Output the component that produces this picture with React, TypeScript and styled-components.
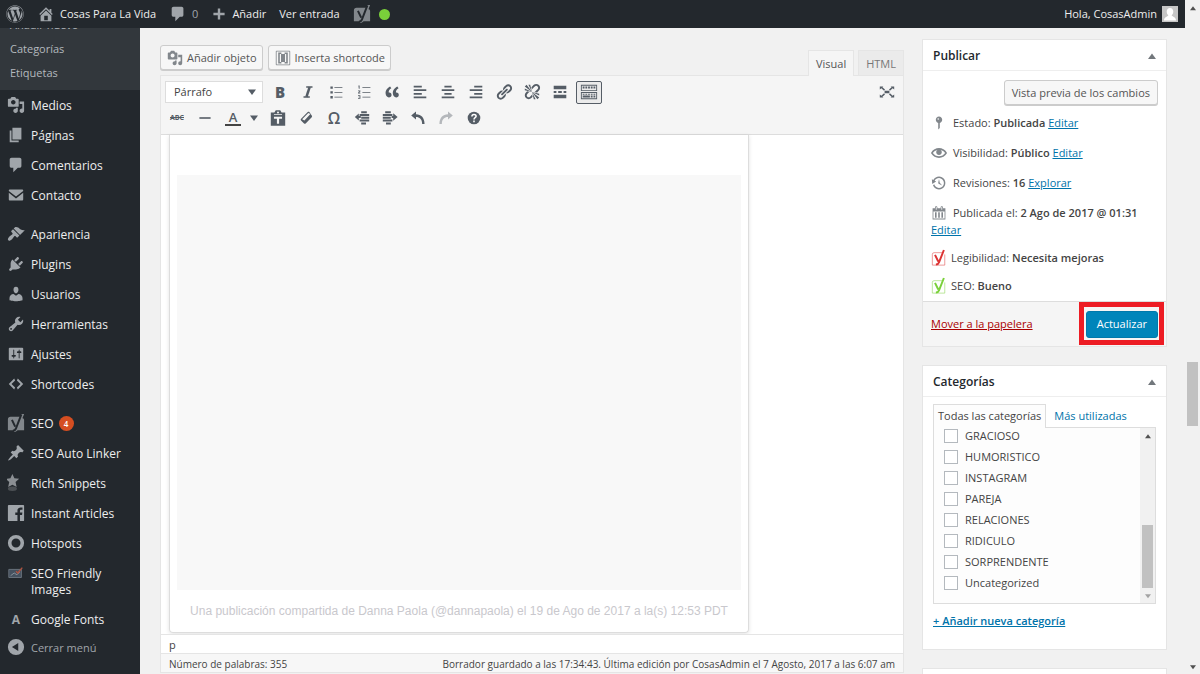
import React from "react";
import styled, { createGlobalStyle } from "styled-components";
import { FaWordpress } from "react-icons/fa";

const GlobalStyle = createGlobalStyle`
  *, *::before, *::after { box-sizing: border-box; }
  html, body { margin: 0; height: 100%; overflow: hidden; }
  body {
    background: #f1f1f1;
    color: #444;
    font-family: "Open Sans", "Noto Sans", sans-serif;
    font-size: 11px;
    line-height: 16px;
  }
  button, input, select { font: inherit; color: inherit; margin: 0; padding: 0; }
  a { color: #0073aa; }
  b { font-weight: 600; }
  h2, p, ul { margin: 0; padding: 0; }
  ul { list-style: none; }
  svg { display: block; flex: none; }
`;

/* ---------- icons ---------- */

const glyphs = {
  media: "M13 11V4c0-.55-.45-1-1-1h-1.67L9 1H5L3.67 3H2c-.55 0-1 .45-1 1v7c0 .55.45 1 1 1h10c.55 0 1-.45 1-1zM7 4.5c1.38 0 2.5 1.12 2.5 2.5S8.38 9.5 7 9.5 4.5 8.38 4.5 7 5.62 4.5 7 4.5zM14 6h5v10.5c0 1.38-1.12 2.5-2.5 2.5S14 17.88 14 16.5s1.12-2.5 2.5-2.5c.17 0 .34.02.5.05V9h-3V6zm-4 8.05V13h2v3.5c0 1.38-1.12 2.5-2.5 2.5S7 17.88 7 16.5 8.12 14 9.5 14c.17 0 .34.02.5.05z",
  page: "M6 15V2h10v13H6zm-1 1h8v2H3V5h2v11z",
  comment: "M5 2h9c1.1 0 2 .9 2 2v7c0 1.1-.9 2-2 2h-2l-5 5v-5H5c-1.1 0-2-.9-2-2V4c0-1.1.9-2 2-2z",
  email: "M3 4h14c.6 0 1 .4 1 1v.6l-8 6.2-8-6.2V5c0-.6.4-1 1-1zM2 7.6l8 6.2 8-6.2V15c0 .6-.4 1-1 1H3c-.6 0-1-.4-1-1z",
  appearance: "M14.48 11.06L7.41 3.99l1.5-1.5c.5-.56 2.3-.47 3.51.32 1.21.8 1.43 1.28 2.91 2.1 1.18.64 2.45 1.26 4.45.85zm-.71.71L6.7 4.7 4.93 6.47c-.39.39-.39 1.02 0 1.41l1.06 1.06c.39.39.39 1.03 0 1.42-.6.6-1.43 1.11-2.21 1.69-.35.26-.7.53-1.01.84C1.43 14.23.4 16.08 1.4 17.07c.99 1 2.84-.03 4.18-1.36.31-.31.58-.66.85-1.02.57-.78 1.08-1.61 1.69-2.21.39-.39 1.02-.39 1.41 0l1.06 1.06c.39.39 1.02.39 1.41 0z",
  plugins: "M13.11 4.36L9.87 7.6 8 5.73l3.24-3.24c.35-.34 1.05-.2 1.56.32.52.51.66 1.21.31 1.55zm-8 1.77l.91-1.12 9.01 9.01-1.19.84c-.71.71-2.63 1.16-3.82 1.16H6.14L4.9 17.26c-.59.59-1.54.59-2.12 0-.59-.58-.59-1.53 0-2.12l1.24-1.24v-3.88c0-1.13.4-3.19 1.09-3.89zm7.26 3.97l3.24-3.24c.34-.35 1.04-.21 1.55.31.52.51.66 1.21.31 1.55l-3.24 3.25z",
  users: "M10 9.25c-2.27 0-2.73-3.44-2.73-3.44C7 4.02 7.82 2 9.97 2c2.16 0 2.98 2.02 2.71 3.81 0 0-.41 3.44-2.68 3.44zm0 2.57L12.72 10c2.39 0 4.52 2.33 4.52 4.53v2.49s-3.65 1.13-7.24 1.13c-3.65 0-7.24-1.13-7.24-1.13v-2.49c0-2.25 1.94-4.48 4.47-4.48z",
  tools: "M16.68 9.77c-1.34 1.34-3.3 1.67-4.95.99l-5.41 6.52c-.99.99-2.59.99-3.58 0s-.99-2.59 0-3.57l6.52-5.42c-.68-1.65-.35-3.61.99-4.95 1.28-1.28 3.12-1.62 4.72-1.06l-2.89 2.89 2.82 2.82 2.86-2.87c.53 1.58.18 3.39-1.08 4.65zM3.81 16.21c.4.39 1.04.39 1.43 0 .4-.4.4-1.04 0-1.43-.39-.4-1.03-.4-1.43 0-.39.39-.39 1.03 0 1.43z",
  settings: "M18 16V4c0-.55-.45-1-1-1H3c-.55 0-1 .45-1 1v12c0 .55.45 1 1 1h14c.55 0 1-.45 1-1zM8 11h1c.55 0 1 .45 1 1s-.45 1-1 1H8v1.5c0 .28-.22.5-.5.5s-.5-.22-.5-.5V13H6c-.55 0-1-.45-1-1s.45-1 1-1h1V5.5c0-.28.22-.5.5-.5s.5.22.5.5V11zm5-2h-1c-.55 0-1-.45-1-1s.45-1 1-1h1V5.5c0-.28.22-.5.5-.5s.5.22.5.5V7h1c.55 0 1 .45 1 1s-.45 1-1 1h-1v5.5c0 .28-.22.5-.5.5s-.5-.22-.5-.5V9z",
  code: "M9 6l-4 4 4 4-1 2-6-6 6-6zm2 8l4-4-4-4 1-2 6 6-6 6z",
  pin: "M10.44 3.02l1.82-1.82 6.36 6.35-1.83 1.82c-1.05-.68-2.48-.57-3.41.36l-.75.75c-.92.93-1.04 2.35-.35 3.41l-1.83 1.82-2.41-2.41-2.8 2.79c-.42.42-3.38 2.71-3.8 2.29s1.86-3.39 2.28-3.81l2.79-2.79L4.1 9.36l1.83-1.82c1.05.69 2.48.57 3.4-.36l.75-.75c.93-.92 1.05-2.35.36-3.41z",
  facebook: "M2 1h16a1 1 0 0 1 1 1v16a1 1 0 0 1-1 1h-3.6v-6.9h2.3l.4-2.7h-2.7V7.7c0-.8.3-1.3 1.4-1.3h1.4V3.9c-.3 0-1.1-.1-2.1-.1-2.1 0-3.5 1.3-3.5 3.6v2H9.2v2.7h2.4V19H2a1 1 0 0 1-1-1V2a1 1 0 0 1 1-1z",
  ring: "M10 1a9 9 0 1 0 0 18 9 9 0 0 0 0-18zm0 4a5 5 0 1 1 0 10 5 5 0 0 1 0-10z",
  collapse: "M10 1a9 9 0 1 0 0 18 9 9 0 0 0 0-18zm2.500 4.500v9L5.500 10z",
  home: "M16 8.5l1.53 1.53-1.06 1.06L10 4.6l-6.47 6.49-1.06-1.06L10 2.5l4 4v-2h2v4zm-6-2.46l6 5.99V18H4v-5.970zM12 17v-5H8v5h4z",
  plus: "M17 8.500v3h-5.500V17h-3v-5.500H3v-3h5.500V3h3v5.500z",
  status: "M14 6c0 1.86-1.28 3.41-3 3.86V16c0 1-2 2-2 2V9.860c-1.72-.45-3-2-3-3.86 0-2.21 1.79-4 4-4s4 1.79 4 4zM8 5c0 .55.45 1 1 1s1-.45 1-1-.45-1-1-1-1 .45-1 1z",
  eye: "M19.700 9.400C17.700 6 14 3.900 10 3.900S2.300 6 .3 9.400L0 10l.3.6c2 3.4 5.700 5.500 9.700 5.500s7.700-2.100 9.700-5.500l.3-.6-.3-.6zM10 14.100c-3.100 0-6-1.600-7.700-4.100C3.600 8 5.700 6.600 8 6.100c-.9.6-1.500 1.700-1.500 2.900 0 1.900 1.600 3.500 3.500 3.500s3.500-1.600 3.500-3.500c0-1.200-.6-2.300-1.500-2.900 2.300.5 4.400 1.900 5.700 3.900-1.700 2.500-4.600 4.100-7.700 4.100z",
  revisions: "M13.65 2.88c3.93 2.01 5.48 6.84 3.47 10.77s-6.83 5.48-10.77 3.47c-1.87-.96-3.2-2.56-3.86-4.4l1.640-1.03c.45 1.57 1.52 2.95 3.08 3.76 3.01 1.54 6.69.35 8.23-2.66 1.55-3.01.36-6.69-2.65-8.24C9.78 3.01 6.1 4.2 4.56 7.21l1.88.97-4.95 3.08-.39-5.82 1.78.91C4.9 2.4 9.75.89 13.65 2.88zm-4.36 7.83C9.11 10.53 9 10.28 9 10c0-.07.03-.12.04-.19h-.01L10 5l.97 4.81L14 13l-4.5-2.12.02-.02c-.08-.04-.16-.09-.23-.15z",
  calendar: "M15 4h3v14H2V4h3V3c0-.83.67-1.5 1.5-1.5S8 2.17 8 3v1h4V3c0-.83.67-1.5 1.5-1.5S15 2.17 15 3v1zM6 3v2.5c0 .28.22.5.5.5s.5-.22.5-.5V3c0-.28-.22-.5-.5-.5S6 2.72 6 3zm7 0v2.5c0 .28.22.5.5.5s.5-.22.5-.5V3c0-.28-.22-.5-.5-.5s-.5.22-.5.5zm4 14V8H3v9h14zM7 16V9H5v7h2zm4 0V9H9v7h2zm4 0V9h-2v7h2z",
  quote: "M9.49 13.22c0-.74-.2-1.38-.61-1.9-.62-.78-1.83-.88-2.53-.72-.29-1.65 1.11-3.75 2.92-4.65L7.88 4c-2.73 1.3-5.42 4.28-4.96 8.05C3.21 14.43 4.59 16 6.54 16c.85 0 1.56-.25 2.12-.75s.83-1.18.83-2.03zm8.05 0c0-.74-.2-1.38-.61-1.9-.63-.78-1.83-.88-2.53-.72-.29-1.65 1.11-3.75 2.92-4.65L15.93 4c-2.73 1.3-5.41 4.28-4.95 8.05.29 2.38 1.66 3.95 3.61 3.95.85 0 1.56-.25 2.12-.75s.83-1.18.83-2.03z",
  link: "M17.74 2.76c1.68 1.69 1.68 4.41 0 6.1l-1.53 1.52c-1.12 1.12-2.7 1.47-4.14 1.09l2.62-2.61.76-.77.76-.76c.84-.84.84-2.2 0-3.04-.84-.85-2.2-.85-3.04 0l-.77.76-3.38 3.38c-.37-1.44-.02-3.02 1.1-4.14l1.52-1.53c1.69-1.68 4.42-1.68 6.1 0zM8.59 13.43l5.34-5.34c.42-.42.42-1.1 0-1.52-.44-.43-1.13-.39-1.53 0l-5.33 5.34c-.42.42-.42 1.1 0 1.52.44.43 1.13.39 1.52 0zm-.76 2.29l4.14-4.15c.38 1.44.03 3.02-1.09 4.14l-1.52 1.53c-1.69 1.68-4.41 1.68-6.1 0-1.68-1.68-1.68-4.42 0-6.1l1.53-1.52c1.12-1.12 2.7-1.47 4.14-1.1l-4.14 4.15c-.85.84-.85 2.2 0 3.05.84.84 2.2.84 3.04 0z",
  unlink: "M17.74 2.26c1.68 1.69 1.68 4.41 0 6.1l-1.53 1.52c-.32.33-.69.58-1.08.77L13 10l1.690-1.64.76-.77.76-.76c.84-.84.84-2.2 0-3.04-.84-.85-2.2-.85-3.04 0l-.77.76-.76.76L10 7l-.65-2.14c.19-.38.44-.75.77-1.070l1.52-1.53c1.69-1.68 4.42-1.68 6.1 0zM2 4l8 6-6-8zm4-2l4 8-2-8H6zM2 6l8 4-8-2V6zm7.36 7.690L10 13l.74 2.35-1.38 1.390c-1.69 1.68-4.41 1.68-6.1 0-1.68-1.68-1.68-4.42 0-6.1l1.39-1.380L7 10l-.69.64-1.52 1.53c-.85.84-.85 2.2 0 3.04.84.85 2.2.85 3.04 0zM18 16l-8-6 6 8zm-4 2l-4-8 2 8h2zm4-4l-8-4 8 2v2z",
  more: "M17 7V3H3v4h14zM6 11V9H3v2h3zm6 0V9H8v2h4zm5 0V9h-3v2h3zm0 6v-4H3v4h14z",
  sink: "M1 2h18v7H1zm1 1v5h16V3zM3 4h2v2H3zm3 0h2v2H6zm3 0h2v2H9zm3 0h2v2h-2zm3 0h2v2h-2zM1 10h18v8H1zm1 1v6h16v-6zm1 1h2v1H3zm3 0h2v1H6zm3 0h2v1H9zm3 0h2v1h-2zm3 0h2v1h-2zM3 14h8v2H3zm9 0h2v2h-2zm3 0h2v2h-2z",
  ul: "M3 3h3v3H3zm5 1h10v1H8zM3 9h3v3H3zm5 1h10v1H8zM3 15h3v3H3zm5 1h10v1H8z",
  ol: "M3 2h1.500v4h-1zM8 4h10v1H8zM2.500 8h3v1.500l-1.500 1.500h1.500v1h-3v-1L4.500 9h-2zM8 10h10v1H8zM2.500 14h3v4.500h-3v-1h2v-.8h-1.500v-.9h1.500V15h-2zM8 16h10v1H8z",
  left: "M3 3h9v2H3zM3 7h14v2H3zM3 11h9v2H3zM3 15h14v2H3z",
  center: "M6 3h8v2H6zM3 7h14v2H3zM6 11h8v2H6zM3 15h14v2H3z",
  right: "M8 3h9v2H8zM3 7h14v2H3zM8 11h9v2H8zM3 15h14v2H3z",
  hr: "M3 9h14v2H3z",
  paste: "M12.500 1.500h-5L6 4H2v14.500h16V4h-4zM10 2.800a1.100 1.100 0 1 1 0 2.200 1.100 1.100 0 0 1 0-2.200zM5.500 5.500h9v.8h-9zM5.500 8.500h9v2.200h-3.300V16.500H8.800v-5.800H5.500z",
  outdent: "M9 1.500h7v2.500H9zM7 5h12v2.500H7zM9 8.500h10V11H9zM7 12h12v2.500H7zM9 15.500h6V18H9zM6 4.500v3h2.500v2.500H6v3L1 8.800z",
  indent: "M4 1.500h7v2.500H4zM1 5h12v2.500H1zM1 8.500h10V11H1zM1 12h12v2.500H1zM5 15.500h6V18H5zM19.500 8.800L14 13.500v-3.500h-2V7.500h2V4z",
  undo: "M7.500 2L1.500 7l6 5V8.800c4.500 0 7.700 2.700 7.700 8.700h3C18.200 9.500 14 5.400 7.500 5.200z",
  redo: "M12.500 2l6 5-6 5V8.800c-4.500 0-7.700 2.700-7.700 8.700h-3C1.800 9.500 6 5.400 12.500 5.200z",
  full: "M1 3h4.500L4.300 4.200l3.200 2.800-1.200 1.300-3.400-2.900L1 7zM19 3h-4.500l1.200 1.200L12.500 7l1.200 1.300 3.400-2.900L19 7zM1 17h4.500l-1.200-1.200L7.500 13l-1.200-1.300-3.400 2.900L1 13zM19 17h-4.500l1.200-1.200-3.200-2.800 1.200-1.300 3.400 2.900L19 13zM7 8.500h6v3H7z",
  shortcode: "M2 1h16a1 1 0 0 1 1 1v16a1 1 0 0 1-1 1H2a1 1 0 0 1-1-1V2a1 1 0 0 1 1-1zm0 1v16h16V2zM4 3h4v2H6v10h2v2H4zm12 0h-4v2h2v10h-2v2h4zM7.500 5h5v10h-5z",
  eraser: "M12.500 1.500l-9.500 9.700c-.7.700-.8 1.600-.1 2.300l4.300 4.200c.7.700 1.600.7 2.300 0l8.700-8.900c.7-.7.700-1.600 0-2.300l-3.400-5c-.7-.7-1.600-.7-2.300 0zM13.300 3l3 1.200-8.600 9.500-3.200-2z",
};

type GlyphName = keyof typeof glyphs;

const Glyph = ({ name, size = 18, color = "currentColor" }: { name: GlyphName; size?: number; color?: string }) => (
  <svg width={size} height={size} viewBox="0 0 20 20" fill={color} fillRule="evenodd" aria-hidden="true">
    <path d={glyphs[name]} />
  </svg>
);

const Yoast = ({ size = 18, plate, mark }: { size?: number; plate: string; mark: string }) => (
  <svg width={size} height={size} viewBox="0 0 20 20" aria-hidden="true">
    <path d="M4 3h13l-.5 1.500 1 .3c1 .3 1.500 1 1.500 2V18H1V6a3 3 0 0 1 3-3z" fill={plate} />
    <path d="M16 0h3l-6.500 16.500c-.8 2.200-2 3.500-5 3.500" fill={plate} />
    <path d="M5.500 6.500l3.600 7.500M16 .5l-6 15.500c-.8 2-1.600 2.500-3.500 2.500" fill="none" stroke={mark} strokeWidth="2.200" />
  </svg>
);

const YoastScore = ({ color }: { color: string }) => (
  <svg width="16" height="18" viewBox="0 0 18 20" aria-hidden="true">
    <path d="M13 4H3.500a2 2 0 0 0-2 2v12h14V6" fill="none" stroke={color} strokeWidth="1" opacity=".55" />
    <path d="M4.500 6.500l3.700 7.500M14.500 1L9 15c-.7 1.900-1.500 2.400-3.500 2.400" fill="none" stroke={color} strokeWidth="2.200" />
  </svg>
);

const Caret = ({ up, color = "#72777c", size = 8 }: { up?: boolean; color?: string; size?: number }) => (
  <svg width={size} height={size} viewBox="0 0 8 8" fill={color} aria-hidden="true">
    <path d={up ? "M4 1.500L8 7H0z" : "M0 1.500h8L4 7z"} />
  </svg>
);

const StarBadge = () => (
  <svg width="18" height="18" viewBox="0 0 20 20" aria-hidden="true">
    <path d="M6 0l2.200 4.800 5.300.6-4 3.600 1.200 5.500L6 12l-4.700 2.500 1.200-5.500-4-3.600 5.300-.6z" fill="#8b8f93" />
    <ellipse cx="6" cy="16.500" rx="5" ry="2.500" fill="#4c5054" />
  </svg>
);

const PictureBadge = () => (
  <svg width="18" height="18" viewBox="0 0 20 20" aria-hidden="true">
    <path d="M2 6h14v9H2z" fill="#45515f" stroke="#6d7680" />
    <path d="M4 13l4-3 3 2 3-3" stroke="#8e979f" fill="none" />
    <path d="M10 8l2 2 5-6" stroke="#b0523f" strokeWidth="1.500" fill="none" />
  </svg>
);

/* ---------- page frame ---------- */

const Shell = styled.div`
  display: flex;
  height: 100vh;
  overflow: hidden;
`;

const Screen = styled.div`
  flex: 1;
  min-width: 0;
  display: flex;
  flex-direction: column;
`;

const ScrollRail = styled.div<{ $thumbAt: string }>`
  width: 15px;
  flex: none;
  display: grid;
  grid-template-rows: 15px ${(p) => p.$thumbAt} 15px;
  justify-items: center;
  background: #f1f1f1;
`;

const RailButton = styled.button`
  width: 15px;
  border: 0;
  background: none;
  display: grid;
  place-items: center;
`;

const Thumb = styled.span`
  width: 11px;
  background: #c1c1c1;
`;

const AdminBar = styled.header`
  height: 28px;
  flex: none;
  display: flex;
  justify-content: space-between;
  padding: 0 7px 0 6px;
  background: #23282d;
  color: #eee;
  position: relative;
  z-index: 2;
`;

const BarGroup = styled.nav`
  display: flex;
  align-items: center;
  gap: 13px;
`;

const BarLink = styled.a<{ $gap?: number }>`
  display: flex;
  align-items: center;
  gap: ${(p) => p.$gap ?? 5}px;
  color: #eee;
  text-decoration: none;
  svg { color: #a0a5aa; }
`;

const Muted = styled.span`
  color: #a0a5aa;
`;

const Dot = styled.span`
  width: 11px;
  height: 11px;
  border-radius: 50%;
  background: #7ad03a;
`;

const Avatar = styled.svg`
  background: #c6c6c6;
`;

const Body = styled.div`
  flex: 1;
  min-height: 0;
  display: flex;
`;

/* ---------- sidebar ---------- */

const Sidebar = styled.nav`
  width: 140px;
  flex: none;
  background: #23282d;
`;

const SubMenu = styled.ul`
  margin-top: -15px;
  padding-bottom: 5px;
  background: #32373c;
`;

const SubLink = styled.a`
  display: block;
  padding: 4px 10px;
  color: #b4b9be;
  text-decoration: none;
`;

const MenuGroup = styled.ul`
  & + & { margin-top: 9px; }
`;

const MenuLink = styled.a<{ $dim?: boolean }>`
  display: flex;
  gap: 6px;
  padding: ${(p) => (p.$dim ? 6 : 8)}px 16px 6px 7px;
  color: ${(p) => (p.$dim ? "#a0a5aa" : "#eee")};
  font-size: ${(p) => (p.$dim ? 11 : 12)}px;
  text-decoration: none;
  svg { color: #a0a5aa; margin: -2px 0 0; }
`;

const Count = styled.span`
  display: inline-block;
  min-width: 15px;
  height: 15px;
  margin-left: 5px;
  border-radius: 8px;
  background: #d54e21;
  color: #fff;
  font-size: 8px;
  font-weight: 600;
  line-height: 15px;
  text-align: center;
  vertical-align: top;
`;

const Letter = styled.span`
  width: 18px;
  text-align: center;
  font-weight: 700;
  font-size: 12px;
  color: #a0a5aa;
`;

/* ---------- editor ---------- */

const Content = styled.main`
  flex: 1;
  min-width: 0;
  display: flex;
  gap: 18px;
  padding: 11px 18px 0 20px;
`;

const Editor = styled.section`
  flex: 1;
  min-width: 0;
  display: flex;
  flex-direction: column;
  padding: 6px 0 1px;
`;

const Button = styled.button<{ $snug?: boolean }>`
  height: 25px;
  padding: 0 ${(p) => (p.$snug ? "5px 0 6px" : "7px")};
  display: flex;
  align-items: center;
  gap: 4px;
  border: 1px solid #ccc;
  border-radius: 3px;
  background: #f7f7f7;
  color: #555;
  box-shadow: 0 1px 0 #ccc;
  white-space: nowrap;
  svg { color: #82878c; }
`;

const EditorHead = styled.div`
  display: flex;
  gap: 5px;
  height: 30px;
`;

const Tabs = styled.div`
  display: flex;
  gap: 4px;
  margin: 5px 0 -1px auto;
`;

const ModeTab = styled.button<{ $on?: boolean }>`
  padding: 1px 7px 0;
  border: 1px solid #e5e5e5;
  border-bottom: 0;
  background: ${(p) => (p.$on ? "#f5f5f5" : "#ebebeb")};
  color: ${(p) => (p.$on ? "#555" : "#777")};
  margin-bottom: ${(p) => (p.$on ? 0 : 1)}px;
  position: relative;
`;

const EditorFrame = styled.div`
  flex: 1;
  min-height: 0;
  display: flex;
  flex-direction: column;
  border: 1px solid #e5e5e5;
`;

const Toolbar = styled.div`
  flex: none;
  padding: 3px 2px;
  background: #f5f5f5;
  border-bottom: 1px solid #ddd;
`;

const ToolRow = styled.div`
  display: flex;
  align-items: center;
  height: 26px;
  color: #555d66;
`;

const FormatBox = styled.label`
  display: grid;
  grid-template-columns: 1fr 14px;
  align-items: center;
  width: 98px;
  height: 22px;
  margin: 0 3px 0 2px;
  border: 1px solid #ddd;
  background: #fff;
  color: #444;
`;

const FormatSelect = styled.select`
  appearance: none;
  border: 0;
  background: none;
  height: 20px;
  padding-left: 8px;
  grid-area: 1 / 1 / 2 / 3;
`;

const FormatArrow = styled.span`
  grid-area: 1 / 2;
  pointer-events: none;
`;

const Tool = styled.button<{ $pressed?: boolean; $faded?: boolean; $end?: boolean; $narrow?: boolean }>`
  width: ${(p) => (p.$narrow ? 13 : p.$pressed ? 26 : 28)}px;
  height: 23px;
  margin-left: ${(p) => (p.$end ? "auto" : p.$pressed ? "2px" : 0)};
  margin-right: ${(p) => (p.$narrow ? 4 : 0)}px;
  display: grid;
  place-items: center;
  border: ${(p) => (p.$pressed ? "1px solid #555d66" : 0)};
  border-radius: 2px;
  background: ${(p) => (p.$pressed ? "#ebebeb" : "none")};
  color: inherit;
  opacity: ${(p) => (p.$faded ? 0.4 : 1)};
`;

const ToolText = styled.span<{ $size: number; $weight?: number; $under?: boolean; $strike?: boolean }>`
  font-size: ${(p) => p.$size}px;
  font-weight: ${(p) => p.$weight ?? 600};
  line-height: ${(p) => (p.$under ? 14 : 16)}px;
  text-decoration: ${(p) => (p.$strike ? "line-through" : "none")};
  border-bottom: ${(p) => (p.$under ? "2px solid #444" : 0)};
  padding: 0 ${(p) => (p.$under ? 4 : 0)}px;
`;

const Canvas = styled.div`
  flex: 1;
  min-height: 0;
  padding: 0 8px 1px;
  background: #fff;
  display: flex;
`;

const Embed = styled.article`
  width: 580px;
  display: flex;
  flex-direction: column;
  padding: 40px 7px 0;
  border: 1px solid #ddd;
  border-top: 0;
  border-radius: 0 0 4px 4px;
  box-shadow: 0 1px 4px rgba(0, 0, 0, 0.12);
`;

const EmbedMedia = styled.div`
  flex: 1;
  background: #f8f8f8;
`;

const EmbedCaption = styled.p`
  padding: 13px 0;
  text-align: center;
  color: #c9c8cd;
  font-family: "Liberation Sans", Arial, sans-serif;
  font-size: 12px;
`;

const PathBar = styled.div`
  flex: none;
  height: 19px;
  padding: 2px 8px 0;
  border-top: 1px solid #e5e5e5;
  background: #fff;
`;

const StatusBar = styled.div`
  flex: none;
  height: 19px;
  display: flex;
  justify-content: space-between;
  padding: 2px 8px;
  border-top: 1px solid #e5e5e5;
  background: #f7f7f7;
  font-size: 10px;
`;

/* ---------- side boxes ---------- */

const Side = styled.aside`
  width: 245px;
  flex: none;
  display: flex;
  flex-direction: column;
  gap: 18px;
`;

const Box = styled.section`
  flex: none;
  background: #fff;
  border: 1px solid #e5e5e5;
`;

const BoxHead = styled.div`
  display: flex;
  align-items: center;
  justify-content: space-between;
  height: 31px;
  padding: 1px 10px 0;
  border-bottom: 1px solid #eee;
  h2 { font-size: 12px; font-weight: 600; color: #23282d; }
`;

const HeadToggle = styled.button`
  border: 0;
  background: none;
`;

const PublishBody = styled.div`
  padding: 9px 8px 1px;
`;

const PreviewRow = styled.div`
  display: flex;
  justify-content: flex-end;
  margin-bottom: 3px;
`;

const Fact = styled.div<{ $tight?: boolean }>`
  display: flex;
  align-items: center;
  gap: ${(p) => (p.$tight ? 4 : 6)}px;
  min-height: ${(p) => (p.$tight ? 28 : 30)}px;
  svg { color: #82878c; }
`;

const FactMore = styled.p`
  line-height: 16px;
  margin: -6px 0 6px;
`;

const PublishFoot = styled.div`
  display: flex;
  align-items: center;
  justify-content: space-between;
  height: 45px;
  padding: 0 8px;
  border-top: 1px solid #ddd;
  background: #f5f5f5;
`;

const TrashLink = styled.a`
  color: #a00;
`;

const UpdateButton = styled.button`
  position: relative;
  height: 27px;
  padding: 0 10px;
  border: 1px solid #0079ab;
  border-radius: 3px;
  background: #0085ba;
  color: #fff;
  &::after {
    content: "";
    position: absolute;
    inset: -10px -7px -8px -8px;
    border: 5px solid #ed1c24;
  }
`;

const CategoryBody = styled.div`
  padding: 7px 10px 20px;
`;

const CatTabs = styled.div`
  display: flex;
`;

const CatTab = styled.button<{ $on?: boolean }>`
  height: 24px;
  padding: 0 ${(p) => (p.$on ? 4 : 7)}px 1px;
  border: solid ${(p) => (p.$on ? "#ddd" : "transparent")};
  border-width: 1px 1px 0;
  background: ${(p) => (p.$on ? "#fdfdfd" : "none")};
  color: ${(p) => (p.$on ? "#444" : "#0073aa")};
  margin-bottom: -1px;
  position: relative;
`;

const CatPanel = styled.div`
  height: 177px;
  display: flex;
  border: 1px solid #ddd;
  background: #fdfdfd;
`;

const CatList = styled.ul`
  flex: 1;
  padding-left: 10px;
  overflow: hidden;
`;

const CatRow = styled.label`
  display: flex;
  align-items: center;
  gap: 7px;
  height: 21px;
  li:first-child > & { margin-top: -3px; }
`;

const Check = styled.input`
  appearance: none;
  width: 14px;
  height: 14px;
  border: 1px solid #b4b9be;
  background: #fff;
`;

const AddCategory = styled.a`
  display: inline-block;
  margin-top: 9px;
  font-weight: 600;
`;

/* ---------- data ---------- */

const menu: { icon: GlyphName; label: string }[][] = [
  [
    { icon: "media", label: "Medios" },
    { icon: "page", label: "Páginas" },
    { icon: "comment", label: "Comentarios" },
    { icon: "email", label: "Contacto" },
  ],
  [
    { icon: "appearance", label: "Apariencia" },
    { icon: "plugins", label: "Plugins" },
    { icon: "users", label: "Usuarios" },
    { icon: "tools", label: "Herramientas" },
    { icon: "settings", label: "Ajustes" },
    { icon: "code", label: "Shortcodes" },
  ],
];

const MenuItem = ({ icon, children, dim }: { icon: React.ReactNode; children: React.ReactNode; dim?: boolean }) => (
  <li>
    <MenuLink href="#" $dim={dim}>
      {icon}
      <span>{children}</span>
    </MenuLink>
  </li>
);

const categories = ["GRACIOSO", "HUMORISTICO", "INSTAGRAM", "PAREJA", "RELACIONES", "RIDICULO", "SORPRENDENTE", "Uncategorized"];

const Rail = ({ at, atEnd }: { at: string; atEnd?: boolean }) => (
  <ScrollRail $thumbAt={at}>
    <RailButton aria-label="Subir"><Caret up color="#505050" size={6} /></RailButton>
    <span />
    <Thumb />
    <span />
    <RailButton aria-label="Bajar"><Caret color={atEnd ? "#a3a3a3" : "#505050"} size={6} /></RailButton>
  </ScrollRail>
);

export default function App() {
  return (
    <Shell>
      <GlobalStyle />
      <Screen>
        <AdminBar>
          <BarGroup>
            <BarLink href="#" aria-label="WordPress"><FaWordpress size={18} /></BarLink>
            <BarLink href="#"><Glyph name="home" />Cosas Para La Vida</BarLink>
            <BarLink href="#"><Glyph name="comment" /><Muted>0</Muted></BarLink>
            <BarLink href="#"><Glyph name="plus" size={16} />Añadir</BarLink>
            <BarLink href="#">Ver entrada</BarLink>
            <BarLink href="#" $gap={8} aria-label="SEO">
              <Yoast plate="#82878c" mark="#23282d" />
              <Dot />
            </BarLink>
          </BarGroup>
          <BarGroup>
            <BarLink href="#">
              Hola, CosasAdmin
              <Avatar width="16" height="16" viewBox="0 0 16 16" aria-hidden="true">
                <path d="M8 2c2 0 3.300 1.600 3.300 3.500 0 1.500-.6 3-1.600 3.800 0 1.200 4.300 1.700 4.300 5.200H2c0-3.500 4.300-4 4.300-5.200-1-.8-1.600-2.300-1.600-3.800C4.700 3.600 6 2 8 2z" fill="#fff" />
              </Avatar>
            </BarLink>
          </BarGroup>
        </AdminBar>

        <Body>
          <Sidebar>
            <SubMenu>
              {["Añadir nuevo", "Categorías", "Etiquetas"].map((t) => (
                <li key={t}><SubLink href="#">{t}</SubLink></li>
              ))}
            </SubMenu>
            {menu.map((group, i) => (
              <MenuGroup key={i}>
                {group.map((m) => (
                  <MenuItem key={m.label} icon={<Glyph name={m.icon} />}>{m.label}</MenuItem>
                ))}
              </MenuGroup>
            ))}
            <MenuGroup>
              <MenuItem icon={<Yoast plate="#82878c" mark="#23282d" />}>SEO<Count>4</Count></MenuItem>
              <MenuItem icon={<Glyph name="pin" />}>SEO Auto Linker</MenuItem>
              <MenuItem icon={<StarBadge />}>Rich Snippets</MenuItem>
              <MenuItem icon={<Glyph name="facebook" />}>Instant Articles</MenuItem>
              <MenuItem icon={<Glyph name="ring" />}>Hotspots</MenuItem>
              <MenuItem icon={<PictureBadge />}>SEO Friendly Images</MenuItem>
              <MenuItem icon={<Letter>A</Letter>}>Google Fonts</MenuItem>
              <MenuItem dim icon={<Glyph name="collapse" />}>Cerrar menú</MenuItem>
            </MenuGroup>
          </Sidebar>

          <Content>
            <Editor>
              <EditorHead>
                <Button $snug><Glyph name="media" size={16} />Añadir objeto</Button>
                <Button $snug><Glyph name="shortcode" size={16} />Inserta shortcode</Button>
                <Tabs>
                  <ModeTab $on>Visual</ModeTab>
                  <ModeTab>HTML</ModeTab>
                </Tabs>
              </EditorHead>
              <EditorFrame>
                <Toolbar>
                  <ToolRow>
                    <FormatBox>
                      <FormatSelect aria-label="Formato"><option>Párrafo</option></FormatSelect>
                      <FormatArrow><Caret color="#555d66" /></FormatArrow>
                    </FormatBox>
                    <Tool aria-label="Negrita"><ToolText $size={15} $weight={800}>B</ToolText></Tool>
                    <Tool aria-label="Cursiva">
                      <svg width="18" height="18" viewBox="0 0 20 20" fill="none" stroke="currentColor" aria-hidden="true">
                        <path d="M8 4.500h7M5 15.500h7" strokeWidth="1.800" />
                        <path d="M11.800 4.500l-3.500 11" strokeWidth="2.800" />
                      </svg>
                    </Tool>
                    <Tool aria-label="Lista"><Glyph name="ul" size={16} /></Tool>
                    <Tool aria-label="Lista numerada"><Glyph name="ol" size={16} /></Tool>
                    <Tool aria-label="Cita"><Glyph name="quote" /></Tool>
                    <Tool aria-label="Izquierda"><Glyph name="left" /></Tool>
                    <Tool aria-label="Centro"><Glyph name="center" /></Tool>
                    <Tool aria-label="Derecha"><Glyph name="right" /></Tool>
                    <Tool aria-label="Enlace"><Glyph name="link" /></Tool>
                    <Tool aria-label="Quitar enlace"><Glyph name="unlink" /></Tool>
                    <Tool aria-label="Leer más"><Glyph name="more" /></Tool>
                    <Tool aria-label="Barra de herramientas" $pressed><Glyph name="sink" /></Tool>
                    <Tool aria-label="Pantalla completa" $end><Glyph name="full" size={16} /></Tool>
                  </ToolRow>
                  <ToolRow>
                    <Tool aria-label="Tachado"><ToolText $size={7} $weight={700} $strike>ABC</ToolText></Tool>
                    <Tool aria-label="Línea"><Glyph name="hr" size={16} /></Tool>
                    <Tool aria-label="Color"><ToolText $size={13} $under>A</ToolText></Tool>
                    <Tool aria-label="Elegir color" $narrow><Caret color="#555d66" /></Tool>
                    <Tool aria-label="Pegar texto"><Glyph name="paste" /></Tool>
                    <Tool aria-label="Limpiar formato"><Glyph name="eraser" size={14} /></Tool>
                    <Tool aria-label="Carácter especial"><ToolText $size={16}>Ω</ToolText></Tool>
                    <Tool aria-label="Reducir sangría"><Glyph name="outdent" size={16} /></Tool>
                    <Tool aria-label="Aumentar sangría"><Glyph name="indent" size={16} /></Tool>
                    <Tool aria-label="Deshacer"><Glyph name="undo" size={16} /></Tool>
                    <Tool aria-label="Rehacer" $faded><Glyph name="redo" size={16} /></Tool>
                    <Tool aria-label="Ayuda">
                      <svg width="14" height="14" viewBox="0 0 20 20" fill="none" aria-hidden="true">
                        <circle cx="10" cy="10" r="9" fill="currentColor" />
                        <path d="M7 8c0-4 6-4 6-.5 0 2-3 2.200-3 4.500M10 13.500v2.500" stroke="#fff" strokeWidth="2.200" />
                      </svg>
                    </Tool>
                  </ToolRow>
                </Toolbar>
                <Canvas>
                  <Embed>
                    <EmbedMedia />
                    <EmbedCaption>Una publicación compartida de Danna Paola (@dannapaola) el 19 de Ago de 2017 a la(s) 12:53 PDT</EmbedCaption>
                  </Embed>
                </Canvas>
                <PathBar>p</PathBar>
                <StatusBar>
                  <span>Número de palabras: 355</span>
                  <span>Borrador guardado a las 17:34:43. Última edición por CosasAdmin el 7 Agosto, 2017 a las 6:07 am</span>
                </StatusBar>
              </EditorFrame>
            </Editor>

            <Side>
              <Box>
                <BoxHead>
                  <h2>Publicar</h2>
                  <HeadToggle aria-label="Plegar Publicar"><Caret up /></HeadToggle>
                </BoxHead>
                <PublishBody>
                  <PreviewRow><Button>Vista previa de los cambios</Button></PreviewRow>
                  <Fact><Glyph name="status" size={16} /><span>Estado: <b>Publicada</b> <a href="#">Editar</a></span></Fact>
                  <Fact><Glyph name="eye" size={16} /><span>Visibilidad: <b>Público</b> <a href="#">Editar</a></span></Fact>
                  <Fact><Glyph name="revisions" size={16} /><span>Revisiones: <b>16</b> <a href="#">Explorar</a></span></Fact>
                  <Fact><Glyph name="calendar" size={16} /><span>Publicada el: <b>2 Ago de 2017 @ 01:31</b></span></Fact>
                  <FactMore><a href="#">Editar</a></FactMore>
                  <Fact $tight><YoastScore color="#dc3232" /><span>Legibilidad: <b>Necesita mejoras</b></span></Fact>
                  <Fact $tight><YoastScore color="#7ad03a" /><span>SEO: <b>Bueno</b></span></Fact>
                </PublishBody>
                <PublishFoot>
                  <TrashLink href="#">Mover a la papelera</TrashLink>
                  <UpdateButton>Actualizar</UpdateButton>
                </PublishFoot>
              </Box>

              <Box>
                <BoxHead>
                  <h2>Categorías</h2>
                  <HeadToggle aria-label="Plegar Categorías"><Caret up /></HeadToggle>
                </BoxHead>
                <CategoryBody>
                  <CatTabs>
                    <CatTab $on>Todas las categorías</CatTab>
                    <CatTab>Más utilizadas</CatTab>
                  </CatTabs>
                  <CatPanel>
                    <CatList>
                      {categories.map((c) => (
                        <li key={c}><CatRow><Check type="checkbox" />{c}</CatRow></li>
                      ))}
                    </CatList>
                    <Rail at="82fr 63fr 0" atEnd />
                  </CatPanel>
                  <AddCategory href="#">+ Añadir nueva categoría</AddCategory>
                </CategoryBody>
              </Box>

              <Box>
                <BoxHead />
              </Box>
            </Side>
          </Content>
        </Body>
      </Screen>
      <Rail at="347fr 64fr 233fr" />
    </Shell>
  );
}
